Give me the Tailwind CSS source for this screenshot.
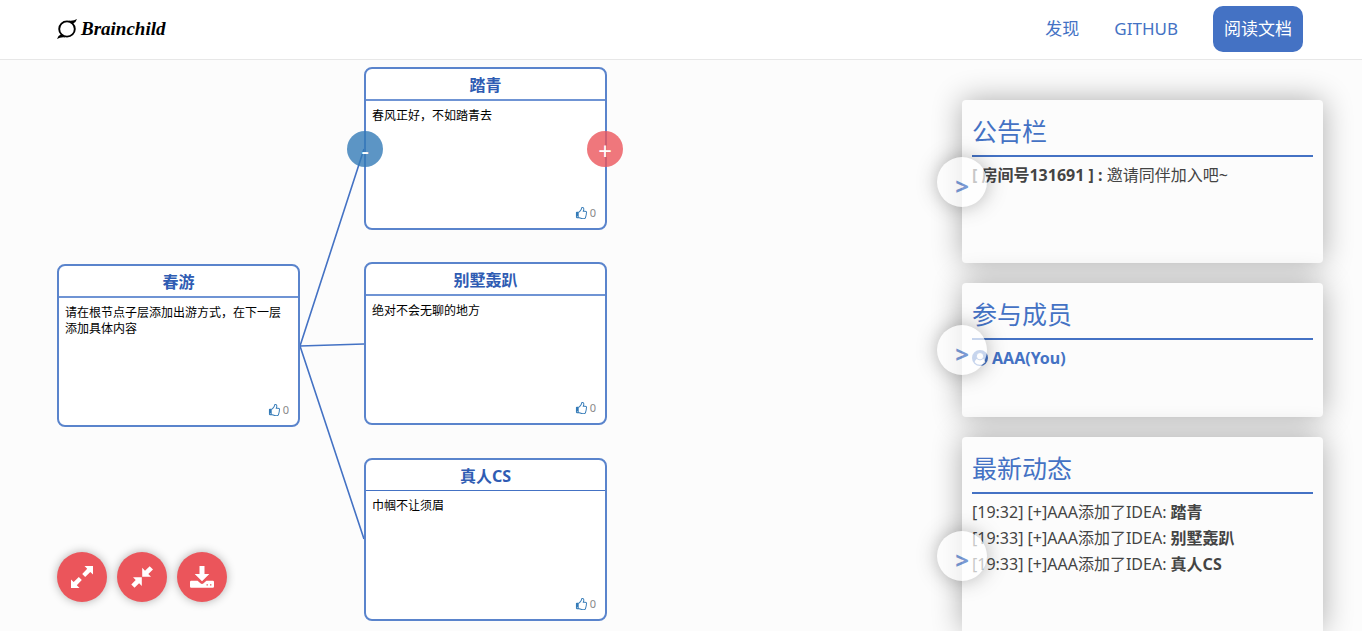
<!DOCTYPE html>
<html lang="zh-CN">
<head>
<meta charset="utf-8">
<meta name="viewport" content="width=device-width, initial-scale=1">
<title>Brainchild</title>
<script src="https://cdn.jsdelivr.net/npm/@tailwindcss/browser@4"></script>
</head>
<body class="flex h-screen flex-col overflow-hidden bg-[#fcfcfc] font-['Noto_Sans','Noto_Sans_CJK_SC',sans-serif] text-base text-[#444]">
<svg class="hidden" aria-hidden="true">
  <symbol id="thumb" viewBox="0 0 1792 1792"><path d="M384 1344q0-26-19-45t-45-19-45 19-19 45 19 45 45 19 45-19 19-45zm1152-576q0-51-39-89.500t-89-38.500h-352q0-58 48-159.500t48-160.500q0-98-32-145t-128-47q-26 26-38 85t-30.500 125.500-59.500 109.500q-22 23-77 91-4 5-23 30t-31.500 41-34.500 42.500-40 44-38.500 35.500-40 27-35.500 9h-32v640h32q13 0 31.500 3t33 6.500 38 11 35 11.500 35.500 12.500 29 10.500q211 73 342 73h121q192 0 192-167 0-26-5-56 30-16 47.500-52.500t17.500-73.500-18-69q53-50 53-119 0-25-10-55.500t-25-47.500q32-1 53.500-47t21.500-81zm128-1q0 89-49 163 9 33 9 69 0 77-38 144 3 21 3 43 0 101-60 178 1 139-85 219.500t-227 80.500h-129q-96 0-189.500-22.500t-216.500-65.500q-116-40-138-40h-288q-53 0-90.500-37.500t-37.500-90.500v-640q0-53 37.500-90.500t90.500-37.500h274q36-24 137-155 58-75 107-128 24-25 35.500-85.500t30.500-126.500 62-108q39-37 90-37 84 0 151 32.500t102 101.500 35 186q0 93-48 192h176q104 0 180 76t76 179z"/></symbol>
</svg>

<header class="flex h-[60px] shrink-0 items-center justify-between border-b border-[#e7e7e7] bg-white pr-[59px] pb-px pl-[57px]">
  <a href="#" class="flex items-center gap-1 font-['Liberation_Serif',serif] text-[19px] font-bold text-black italic">
    <svg class="size-5" viewBox="0 0 20 20" aria-hidden="true">
      <ellipse cx="10" cy="10" rx="7.800" ry="7.600" fill="none" stroke="#000" stroke-width="1.900"/>
      <path d="M11.500 1.500Q16.500 2.200 20 0Q19 3.500 15.800 4.800ZM8.500 18.500Q3.500 17.800 0 20Q1 16.500 4.200 15.200Z"/>
    </svg>
    Brainchild
  </a>
  <nav class="flex items-center gap-[35px] text-[17px] text-[#4472c4]">
    <a href="#">发现</a>
    <a href="#">GITHUB</a>
    <a href="#" class="flex h-[46px] items-center rounded-[10px] bg-[#4472c4] px-[11px] text-white">阅读文档</a>
  </nav>
</header>

<div class="relative flex min-h-0 flex-1 justify-end">
  <main class="absolute inset-0 text-black">
    <svg class="absolute inset-0 size-full" fill="none" stroke="#4472c4" stroke-width="1.600" aria-hidden="true">
      <path d="M300 286L364 89M300 286L364 284M300 286L364 479"/>
    </svg>

    <article class="absolute top-[204px] left-[57px] flex h-[163px] w-[243px] flex-col rounded-lg border-2 border-[#5a84cc] bg-white">
      <h2 class="h-8 border-b-2 border-[#6f94d4] text-center text-base leading-[32px] font-bold text-[#2f5cb3]">春游</h2>
      <p class="flex-1 px-1.5 pt-[7px] text-xs">请在根节点子层添加出游方式，在下一层添加具体内容</p>
      <button class="flex items-center gap-0.5 self-end pr-[9px] pb-[7px] text-[11px] leading-4 text-[#888]" aria-label="点赞 0"><svg class="size-[13px] fill-[#337ab7]"><use href="#thumb"/></svg>0</button>
    </article>

    <article class="absolute top-[7px] left-[364px] flex h-[163px] w-[243px] flex-col rounded-lg border-2 border-[#5a84cc] bg-white">
      <h2 class="h-8 border-b-2 border-[#6f94d4] text-center text-base leading-[32px] font-bold text-[#2f5cb3]">踏青</h2>
      <p class="flex-1 px-1.5 pt-[7px] text-xs">春风正好，不如踏青去</p>
      <button class="flex items-center gap-0.5 self-end pr-[9px] pb-[7px] text-[11px] leading-4 text-[#888]" aria-label="点赞 0"><svg class="size-[13px] fill-[#337ab7]"><use href="#thumb"/></svg>0</button>
    </article>

    <article class="absolute top-[202px] left-[364px] flex h-[163px] w-[243px] flex-col rounded-lg border-2 border-[#5a84cc] bg-white">
      <h2 class="h-8 border-b-2 border-[#6f94d4] text-center text-base leading-[32px] font-bold text-[#2f5cb3]">别墅轰趴</h2>
      <p class="flex-1 px-1.5 pt-[7px] text-xs">绝对不会无聊的地方</p>
      <button class="flex items-center gap-0.5 self-end pr-[9px] pb-[7px] text-[11px] leading-4 text-[#888]" aria-label="点赞 0"><svg class="size-[13px] fill-[#337ab7]"><use href="#thumb"/></svg>0</button>
    </article>

    <article class="absolute top-[398px] left-[364px] flex h-[163px] w-[243px] flex-col rounded-lg border-2 border-[#5a84cc] bg-white">
      <h2 class="h-[31px] border-b border-[#4472c4] text-center text-base leading-[32px] font-bold text-[#2f5cb3]">真人CS</h2>
      <p class="flex-1 px-1.5 pt-[7px] text-xs">巾帼不让须眉</p>
      <button class="flex items-center gap-0.5 self-end pr-[9px] pb-[7px] text-[11px] leading-4 text-[#888]" aria-label="点赞 0"><svg class="size-[13px] fill-[#337ab7]"><use href="#thumb"/></svg>0</button>
    </article>

    <button class="absolute top-[71px] left-[347px] size-9 rounded-full bg-[#337ab7]/80 pt-0.5 text-2xl leading-8 text-white">-</button>
    <button class="absolute top-[71px] left-[587px] size-9 rounded-full bg-[#eb555b]/80 pt-1 text-2xl leading-8 text-white">+</button>

    <div class="absolute bottom-[29px] left-[57px] flex gap-2.5">
      <button aria-label="展开" class="flex size-[50px] items-center justify-center rounded-full bg-[#eb555b] shadow-[0_0_10px_rgba(0,0,0,0.3)]">
        <svg class="size-[22px]" viewBox="0 0 22 22" fill="#fff"><path d="M13.500 0H22V8.500L19.300 6L14.200 11L11.200 8L16.200 2.800ZM0 13.500L2.700 16L7.800 11L10.800 14L5.800 19.200L8.500 22H0Z"/></svg>
      </button>
      <button aria-label="收起" class="flex size-[50px] items-center justify-center rounded-full bg-[#eb555b] shadow-[0_0_10px_rgba(0,0,0,0.3)]">
        <svg class="size-[22px]" viewBox="0 0 22 22" fill="#fff"><path d="M11.200 1.800V10.800H20L17.300 8.100L22 3.400L18.700.2L14 4.700ZM2 11.200H10.800V20L8.100 17.300L3.500 21.800L.3 18.600L4.700 14Z"/></svg>
      </button>
      <button aria-label="下载" class="flex size-[50px] items-center justify-center rounded-full bg-[#eb555b] shadow-[0_0_10px_rgba(0,0,0,0.3)]">
        <svg class="size-6" viewBox="0 0 24 24" fill="#fff"><path d="M9.500 1H14.500V9H19.300L12 16.200L4.700 9H9.500Z"/><path fill-rule="evenodd" d="M1.200 15.700H7.600L10.400 18.300Q12 19.500 13.600 18.300L16.400 15.700H22.800Q24 15.700 24 17V21.600Q24 22.800 22.800 22.800H1.200Q0 22.800 0 21.600V17Q0 15.700 1.200 15.700ZM16.500 19.200V20.600H17.900V19.200ZM20 19.200V20.600H21.400V19.200Z"/></svg>
      </button>
    </div>
  </main>

  <aside class="relative mr-[39px] flex w-[361px] flex-col gap-5 pt-10">
    <section class="relative h-[163px] shrink-0 rounded bg-[#fcfcfc] p-2.5 shadow-[0_0_30px_rgba(0,0,0,0.32)]">
      <h2 class="h-[47px] border-b-2 border-[#4472c4] text-[25px] leading-[42px] text-[#4472c4]">公告栏</h2>
      <p class="pt-[5px] leading-[26px]"><strong>[ 房间号131691 ] : </strong>邀请同伴加入吧~</p>
      <button aria-label="收起公告栏" class="absolute top-[57px] -left-[25px] size-[50px] rounded-full bg-white pt-2 text-2xl leading-[42px] font-bold text-[#4472c4] opacity-70 shadow-[0_0_20px_rgba(0,0,0,0.4)]">&gt;</button>
    </section>
    <section class="relative h-[134px] shrink-0 rounded bg-[#fcfcfc] p-2.5 shadow-[0_0_30px_rgba(0,0,0,0.32)]">
      <h2 class="h-[47px] border-b-2 border-[#4472c4] text-[25px] leading-[42px] text-[#4472c4]">参与成员</h2>
      <p class="flex items-center gap-1 pt-[5px] leading-[26px] font-bold text-[#4472c4]">
        <svg class="size-4" viewBox="0 0 16 16" aria-hidden="true"><path fill="#4472c4" fill-rule="evenodd" d="M8 0A8 8 0 1 1 8 16A8 8 0 1 1 8 0ZM8 2.500A3.700 3.700 0 0 0 5.400 8.800C3.800 9.400 3 10.700 2.700 12.300A6.800 6.800 0 0 0 13.300 12.300C13 10.700 12.200 9.400 10.600 8.800A3.700 3.700 0 0 0 8 2.500Z"/><circle cx="8" cy="6.200" r="3.700" fill="none" stroke="#4472c4"/></svg>
        AAA(You)
      </p>
      <button aria-label="收起参与成员" class="absolute top-[42px] -left-[25px] size-[50px] rounded-full bg-white pt-2 text-2xl leading-[42px] font-bold text-[#4472c4] opacity-70 shadow-[0_0_20px_rgba(0,0,0,0.4)]">&gt;</button>
    </section>
    <section class="relative flex-1 rounded-t bg-[#fcfcfc] p-2.5 shadow-[0_0_30px_rgba(0,0,0,0.32)]">
      <h2 class="h-[47px] border-b-2 border-[#4472c4] text-[25px] leading-[42px] text-[#4472c4]">最新动态</h2>
      <ul class="pt-[5px] leading-[26px]">
        <li>[19:32] [+]AAA添加了IDEA: <strong>踏青</strong></li>
        <li>[19:33] [+]AAA添加了IDEA: <strong>别墅轰趴</strong></li>
        <li>[19:33] [+]AAA添加了IDEA: <strong>真人CS</strong></li>
      </ul>
      <button aria-label="收起最新动态" class="absolute top-[94px] -left-[25px] size-[50px] rounded-full bg-white pt-2 text-2xl leading-[42px] font-bold text-[#4472c4] opacity-70 shadow-[0_0_20px_rgba(0,0,0,0.4)]">&gt;</button>
    </section>
  </aside>
</div>
</body>
</html>
